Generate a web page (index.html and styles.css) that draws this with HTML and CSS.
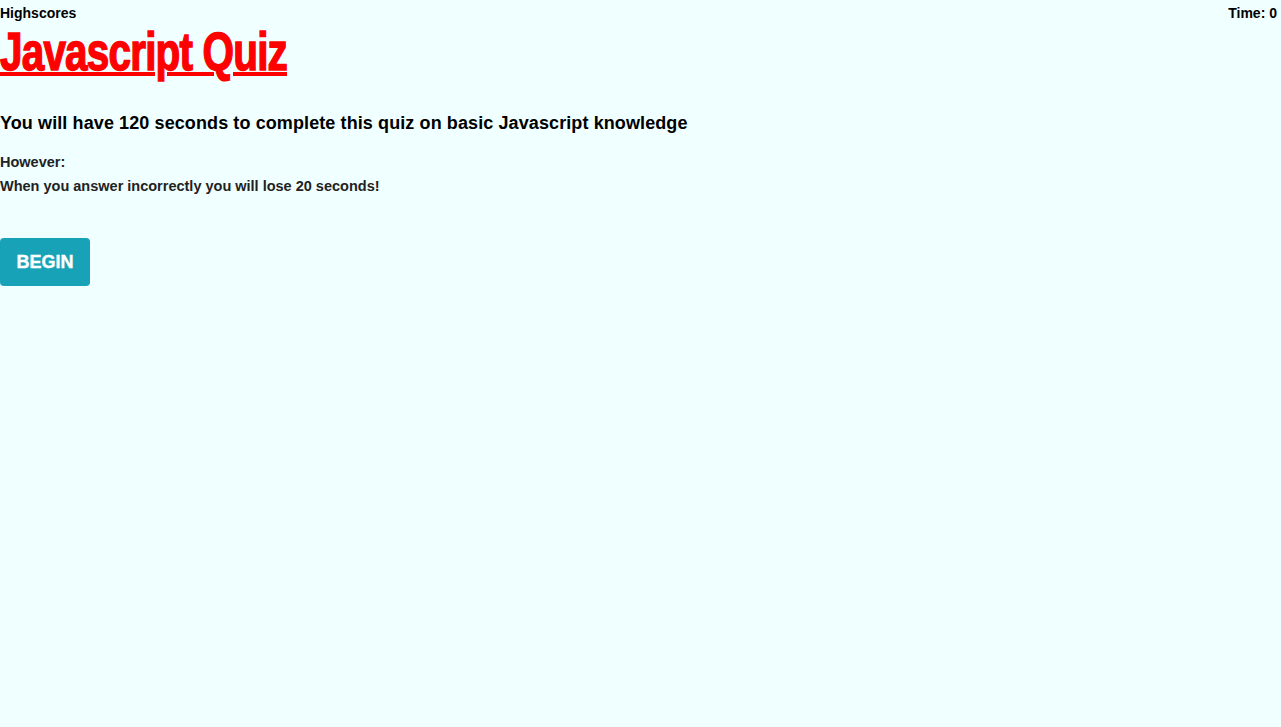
FILE: index.html
```html
<!DOCTYPE html>
<html>
<head>
<meta charset="utf-8">
<link rel="stylesheet" href="styles.css">
</head>
<body>
<header class="topbar">
  <a class="scores">Highscores</a>
  <span class="timer">Time: 0</span>
</header>
<h1 class="title"><span class="title-text">Javascript Quiz</span></h1>
<main class="intro">
  <h3 class="lead">You will have 120 seconds to complete this quiz on basic Javascript knowledge</h3>
  <p class="note">However:</p>
  <p class="note">When you answer incorrectly you will lose 20 seconds!</p>
  <button class="begin">BEGIN</button>
</main>
</body>
</html>
```
FILE: styles.css
```css
html, body {
  margin: 0;
  padding: 0;
  background: #f0ffff;
}
body {
  font-family: "Liberation Sans", Arial, sans-serif;
  color: #000;
}
.topbar {
  display: flex;
  justify-content: space-between;
  align-items: center;
  height: 26px;
  padding: 0 4px 0 0;
  font-weight: bold;
  font-size: 14px;
}
.title {
  margin: 0;
  height: 50px;
  font-family: "Liberation Sans", Arial, sans-serif;
  font-weight: bold;
  font-size: 54px;
  line-height: 50px;
  color: #ff0000;
  white-space: nowrap;
}
.title-text {
  display: inline-block;
  text-decoration: underline;
  text-decoration-thickness: 4px;
  text-underline-offset: 2px;
  letter-spacing: -1.1px;
  -webkit-text-stroke: 1.5px #ff0000;
  transform: scaleX(0.75);
  transform-origin: left top;
}
.intro {
  padding-top: 35px;
}
.lead {
  margin: 0 0 15px;
  font-size: 18px;
  line-height: 24px;
  font-weight: bold;
  letter-spacing: 0.1px;
}
.note {
  margin: 0;
  font-size: 14.5px;
  line-height: 24px;
  font-weight: bold;
  color: #222;
}
.begin {
  margin-top: 40px;
  width: 90px;
  height: 48px;
  border: none;
  border-radius: 4px;
  background: #17a2b8;
  color: #fff;
  font-family: "Liberation Sans", Arial, sans-serif;
  font-weight: bold;
  font-size: 18px;
  -webkit-text-stroke: 0.4px #fff;
}
```
